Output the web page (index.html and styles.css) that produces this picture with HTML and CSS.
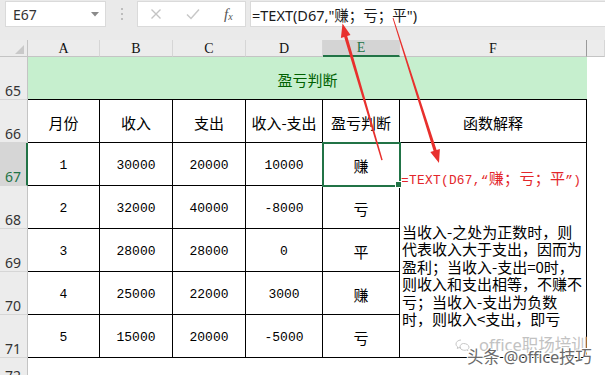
FILE: index.html
```html
<!DOCTYPE html>
<html lang="zh">
<head>
<meta charset="utf-8">
<title>盈亏判断</title>
<link rel="stylesheet" href="styles.css">
</head>
<body>
<div class="app">
  <div class="fbar">
    <div class="namebox">
      <span class="ref">E67</span>
      <svg class="dd" width="8" height="5" viewBox="0 0 8 5"><path d="M0 0H8L4 4.5Z" fill="#8a8a8a"/></svg>
    </div>
    <div class="sep"><span></span><span></span><span></span></div>
    <div class="fxbox">
      <svg class="ico" width="12" height="12" viewBox="0 0 12 12"><path d="M1.5 1.5L10.5 10.5M10.5 1.5L1.5 10.5" stroke="#c4c4c4" stroke-width="1.4" fill="none"/></svg>
      <svg class="ico" width="14" height="12" viewBox="0 0 14 12"><path d="M1 6.5L5 10.5L13 1.5" stroke="#c8c8c8" stroke-width="1.5" fill="none"/></svg>
      <span class="fx">f<sub>x</sub></span>
    </div>
    <div class="formula">=TEXT(D67,"赚；亏；平")</div>
  </div>

  <table class="sheet">
    <tr class="hdr">
      <th class="corner"><span class="tri"></span></th>
      <th class="ch wA">A</th>
      <th class="ch wB">B</th>
      <th class="ch wC">C</th>
      <th class="ch wD">D</th>
      <th class="ch wE on">E</th>
      <th class="ch wF">F</th>
      <th class="ch wG"></th>
    </tr>
    <tr>
      <td class="rh">65</td>
      <td class="title" colspan="6">盈亏判断</td>
      <td class="blank"></td>
    </tr>
    <tr>
      <td class="rh">66</td>
      <td class="c">月份</td>
      <td class="c">收入</td>
      <td class="c">支出</td>
      <td class="c">收入-支出</td>
      <td class="c">盈亏判断</td>
      <td class="c">函数解释</td>
      <td class="blank"></td>
    </tr>
    <tr>
      <td class="rh on">67</td>
      <td class="c n">1</td>
      <td class="c n">30000</td>
      <td class="c n">20000</td>
      <td class="c n">10000</td>
      <td class="c sel">赚</td>
      <td class="c fnote"><span class="red"><span class="m">=TEXT(D67,“</span>赚；亏；平<span class="m">”)</span></span></td>
      <td class="blank"></td>
    </tr>
    <tr>
      <td class="rh">68</td>
      <td class="c n">2</td>
      <td class="c n">32000</td>
      <td class="c n">40000</td>
      <td class="c n">-8000</td>
      <td class="c">亏</td>
      <td class="c expl" rowspan="4">当收入-之处为正数时，则<br>代表收入大于支出，因而为<br>盈利；当收入-支出=0时，<br>则收入和支出相等，不赚不<br>亏；当收入-支出为负数<br>时，则收入&lt;支出，即亏</td>
      <td class="blank"></td>
    </tr>
    <tr>
      <td class="rh">69</td>
      <td class="c n">3</td>
      <td class="c n">28000</td>
      <td class="c n">28000</td>
      <td class="c n">0</td>
      <td class="c">平</td>
      <td class="blank"></td>
    </tr>
    <tr>
      <td class="rh">70</td>
      <td class="c n">4</td>
      <td class="c n">25000</td>
      <td class="c n">22000</td>
      <td class="c n">3000</td>
      <td class="c">赚</td>
      <td class="blank"></td>
    </tr>
    <tr>
      <td class="rh">71</td>
      <td class="c n">5</td>
      <td class="c n">15000</td>
      <td class="c n">20000</td>
      <td class="c n">-5000</td>
      <td class="c">亏</td>
      <td class="blank"></td>
    </tr>
    <tr class="last">
      <td class="rh">72</td>
      <td class="blank" colspan="7"></td>
    </tr>
  </table>

  <svg class="arrows" width="605" height="375" viewBox="0 0 605 375">
    <polygon fill="#e8302d" points="342.5,23.5 350.5,35.1 347.2,36 382.7,160 381.3,160.2 344.2,37 340.9,37.9"/>
    <polygon fill="#e8302d" points="439,163 439.9,149.1 436.6,150.1 393.4,17.8 392.6,18.2 433.6,151.1 430.3,152.1"/>
  </svg>

  <div class="wm">
    <div class="wm1">
      <svg width="15" height="12" viewBox="0 0 15 12"><path d="M6 1C3 1 1 3 1 5C1 6.3 1.7 7.3 2.7 8L2.3 9.5L4 8.6C4.6 8.8 5.3 8.9 6 8.9M8.5 4.5C11.3 4.5 14 6 14 8.2C14 9.2 13.4 10 12.6 10.6L12.9 11.7L11.5 11C10.6 11.3 9.6 11.4 8.5 11.2C6.4 10.8 5 9.6 5 8C5 6 6.6 4.5 8.5 4.5Z" fill="none" stroke="#c6c6c6" stroke-width="1"/></svg>
      <span>office职场培训</span>
    </div>
    <div class="wm2">头条 @office技巧</div>
  </div>
</div>
</body>
</html>
```

FILE: styles.css
```css
html, body {
  margin: 0;
  padding: 0;
}

body {
  width: 605px;
  height: 375px;
  overflow: hidden;
  background: #ffffff;
  font-family: "Noto Sans CJK SC", sans-serif;
}

.app {
  position: relative;
  width: 605px;
  height: 375px;
  overflow: hidden;
  background: #eaeaea;
}

/* ---------- formula bar ---------- */
.fbar {
  display: flex;
  height: 28px;
  box-sizing: border-box;
  padding-top: 1px;
  padding-bottom: 1px;
  margin-bottom: 12px;
}

.namebox {
  width: 101px;
  margin-left: 5px;
  box-sizing: border-box;
  background: #ffffff;
  border: 1px solid #dadada;
  display: flex;
  align-items: center;
  justify-content: space-between;
  padding: 0 6px 0 7px;
}

.ref {
  font-family: "Noto Sans", "Noto Sans CJK SC", sans-serif;
  font-size: 14px;
  color: #333333;
}

.sep {
  width: 31px;
  display: flex;
  flex-direction: column;
  align-items: center;
  justify-content: center;
  gap: 3px;
}

.sep span {
  width: 2px;
  height: 2px;
  background: #bdbdbd;
}

.fxbox {
  width: 109px;
  box-sizing: border-box;
  background: #ffffff;
  border: 1px solid #dadada;
  display: flex;
  align-items: center;
  padding-left: 12px;
  margin-right: 4px;
}

.fxbox .ico:first-child {
  margin-right: 24px;
}

.fx {
  margin-left: 24px;
  font-family: "Liberation Serif", serif;
  font-style: italic;
  font-size: 15px;
  color: #555555;
  line-height: 1;
}

.fx sub {
  font-size: 10px;
  vertical-align: -1px;
}

.formula {
  flex: 1;
  background: #ffffff;
  border: 1px solid #dadada;
  border-right: none;
  display: flex;
  align-items: center;
  padding-left: 1px;
  font-family: "Noto Sans", "Noto Sans CJK SC", sans-serif;
  font-size: 14.5px;
  color: #1a1a1a;
  white-space: nowrap;
}

/* ---------- sheet ---------- */
.sheet {
  border-collapse: separate;
  border-spacing: 0;
  table-layout: fixed;
  width: 605px;
  background: #ffffff;
}

.sheet th,
.sheet td {
  box-sizing: border-box;
  padding: 0;
}

.hdr th {
  height: 16px;
  background: #ececec;
  border-bottom: 1px solid #c4c4c4;
  border-right: 1px solid #d6d6d6;
  font-family: "Liberation Serif", serif;
  font-weight: normal;
  font-size: 14px;
  line-height: 15px;
  color: #111111;
  text-align: center;
  vertical-align: middle;
}

.hdr th.corner {
  width: 28px;
  position: relative;
  border-right: 1px solid #c4c4c4;
}

.tri {
  position: absolute;
  right: 3px;
  bottom: 2px;
  width: 0;
  height: 0;
  border-left: 9px solid transparent;
  border-bottom: 9px solid #c9c9c9;
}

.wA { width: 72px; }
.wB { width: 73px; }
.wC { width: 73px; }
.wD { width: 77px; }
.wE { width: 77px; }
.wF { width: 187px; }
.wG { width: 18px; }

.hdr th.wF {
  border-right: 1px solid #9a9a9a;
}

.hdr th.on {
  background: #d4d4d4;
  color: #217346;
  border-bottom: 2px solid #217346;
}

.sheet td {
  height: 43px;
}

td.rh {
  background: #ececec;
  border-right: 1px solid #c4c4c4;
  border-bottom: 1px solid #d6d6d6;
  font-family: "Noto Sans", sans-serif;
  font-size: 14px;
  line-height: 14px;
  color: #333333;
  vertical-align: bottom;
  text-align: left;
  padding: 0 0 1px 5px;
}

td.rh.on {
  background: #d6d6d6;
  color: #217346;
  border-right: 2px solid #217346;
}

tr.last td {
  height: 27px;
}

td.title {
  background: #c6efce;
  border-bottom: 1px solid #000000;
  color: #006100;
  font-size: 15px;
  text-align: center;
  vertical-align: middle;
  padding-top: 2px;
}

td.blank {
  background: #ffffff;
}

td.c {
  border-right: 1px solid #000000;
  border-bottom: 1px solid #000000;
  text-align: center;
  vertical-align: middle;
  font-size: 15px;
  color: #000000;
  padding-top: 3px;
}

td.n {
  font-family: "Liberation Mono", monospace;
  font-size: 13px;
}

td.sel {
  position: relative;
  outline: 2px solid #217346;
  outline-offset: -1px;
}

td.sel::after {
  content: "";
  position: absolute;
  right: -3px;
  bottom: -3px;
  width: 5px;
  height: 5px;
  background: #217346;
  border: 1px solid #ffffff;
  z-index: 2;
}

td.fnote {
  border-bottom: none;
  vertical-align: bottom;
  text-align: left;
  padding: 0 0 0 1px;
  line-height: 10px;
  white-space: nowrap;
}

.red {
  color: #e3262b;
  font-size: 15px;
  letter-spacing: 0.3px;
}

.red .m {
  font-family: "Liberation Mono", monospace;
  font-size: 12.8px;
}

td.expl {
  text-align: left;
  vertical-align: top;
  padding: 37px 0 0 2px;
  font-size: 15px;
  line-height: 17.4px;
  white-space: nowrap;
}

/* ---------- overlays ---------- */
.arrows {
  position: absolute;
  left: 0;
  top: 0;
  pointer-events: none;
  z-index: 5;
}

.wm {
  position: absolute;
  left: 455px;
  top: 335px;
  width: 150px;
  height: 32px;
  z-index: 6;
}

.wm1 {
  position: absolute;
  left: 0;
  top: 0;
  display: flex;
  align-items: center;
  gap: 9px;
  font-family: "Noto Sans", "Noto Sans CJK SC", sans-serif;
  font-size: 16.5px;
  line-height: 19px;
  color: #c2c2c2;
  white-space: nowrap;
}

.wm2 {
  position: absolute;
  left: 12px;
  top: 12px;
  font-family: "Noto Sans", "Noto Sans CJK SC", sans-serif;
  font-size: 16.5px;
  line-height: 19px;
  color: #6a6a6a;
  white-space: nowrap;
  letter-spacing: -0.3px;
  text-shadow: 1px 0 0 #ffffff, -1px 0 0 #ffffff, 0 1px 0 #ffffff, 0 -1px 0 #ffffff, 1px 1px 0 #ffffff, -1px -1px 0 #ffffff;
}
```
